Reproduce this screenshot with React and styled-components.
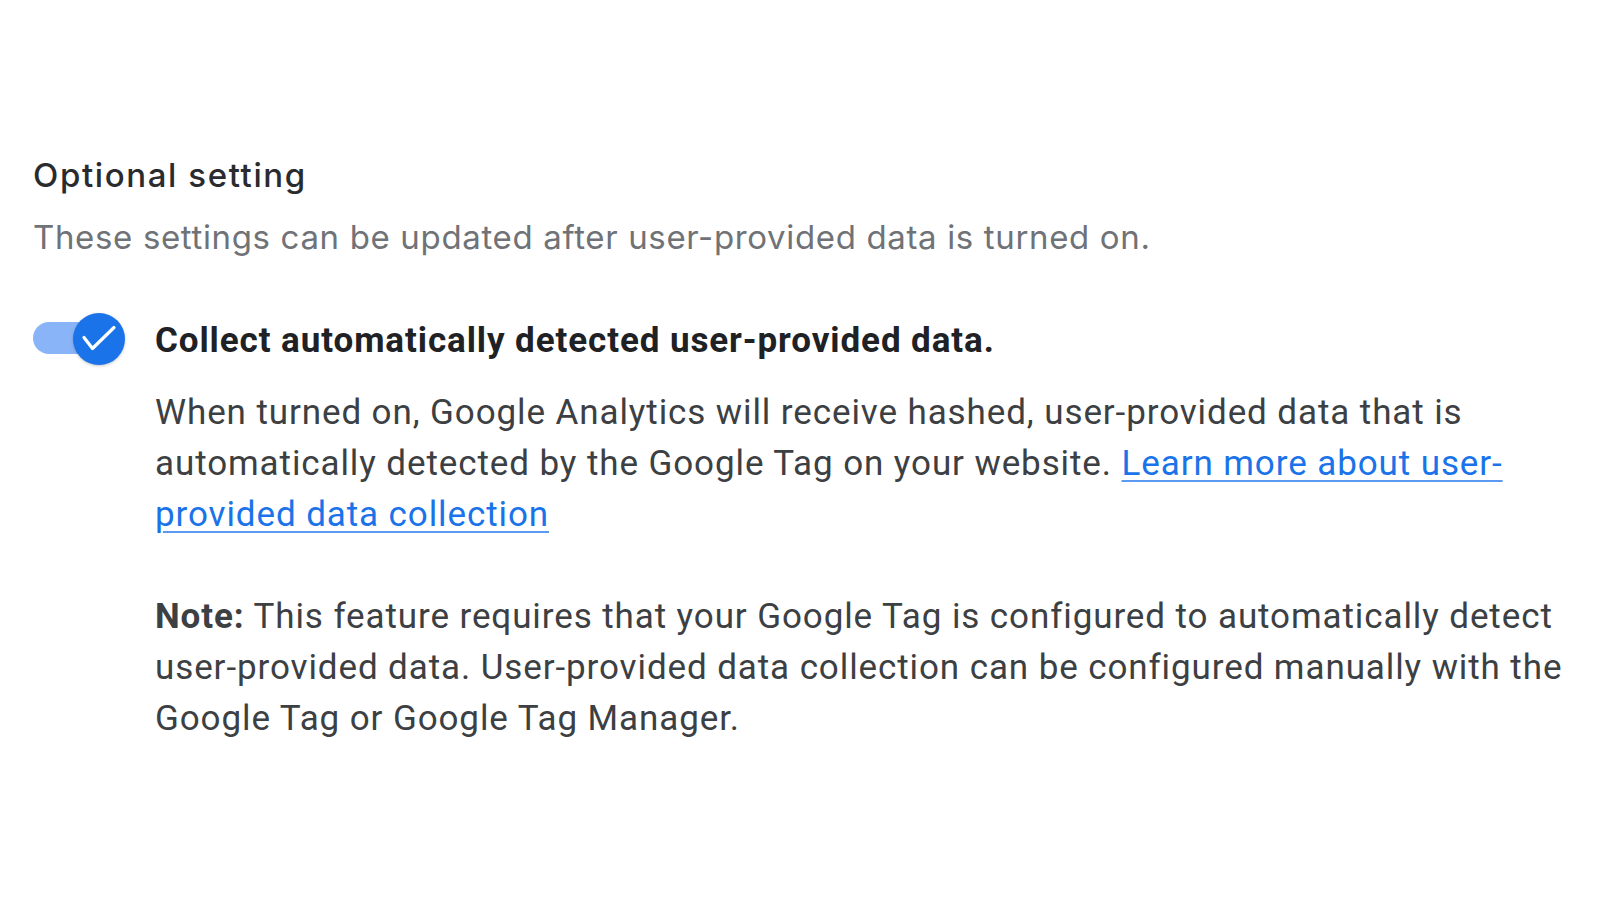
import styled, { createGlobalStyle } from "styled-components";

const GlobalStyle = createGlobalStyle`
  html, body {
    margin: 0;
    padding: 0;
    background: #ffffff;
  }
  body {
    font-family: Roboto, "Liberation Sans", Arial, sans-serif;
    -webkit-font-smoothing: antialiased;
  }
`;

const Page = styled.div`
  width: 1600px;
  height: 900px;
  box-sizing: border-box;
  padding: 153px 10px 0 33px;
`;

const Heading = styled.h2`
  margin: 0;
  font-family: Inter, "Open Sans", Roboto, sans-serif;
  font-weight: 500;
  font-size: 33px;
  line-height: 44px;
  letter-spacing: 1.6px;
  color: #2a2b2e;
`;

const Subtitle = styled.p`
  margin: 18px 0 0;
  font-family: Inter, "Open Sans", Roboto, sans-serif;
  font-size: 33px;
  line-height: 44px;
  letter-spacing: 0.65px;
  color: #6f7276;
`;

const SettingRow = styled.div`
  display: flex;
  align-items: flex-start;
  gap: 30px;
  margin-top: 55px;
`;

const Track = styled.button`
  position: relative;
  flex: none;
  width: 92px;
  height: 52px;
  margin-top: -1px;
  padding: 0;
  border: none;
  background: none;
  cursor: pointer;

  &::before {
    content: "";
    position: absolute;
    left: 0;
    top: 9px;
    width: 72px;
    height: 32px;
    border-radius: 16px;
    background: #8ab4f8;
  }
`;

const Knob = styled.span`
  position: absolute;
  right: 0;
  top: 0;
  width: 52px;
  height: 52px;
  border-radius: 50%;
  background: #1a73e8;
  box-shadow: 0 1px 3px rgba(60, 64, 67, 0.3);
`;

const Content = styled.div`
  flex: 1;
  min-width: 0;
  padding-top: 1px;
`;

const Title = styled.div`
  font-size: 35px;
  line-height: 51px;
  font-weight: 700;
  letter-spacing: 0.9px;
  color: #202124;
`;

const Paragraph = styled.p`
  margin: ${({ $first }) => ($first ? "21px" : "51px")} 0 0;
  font-size: 35px;
  line-height: 51px;
  letter-spacing: 0.9px;
  color: #3c4043;

  strong {
    font-weight: 700;
    color: #3c4043;
  }
`;

const Link = styled.a`
  color: #1a73e8;
  text-decoration: underline;
  text-underline-offset: 5px;
  text-decoration-thickness: 2px;
  text-decoration-color: #5b9af0;
`;

const Switch = ({ checked }) => (
  <Track role="switch" aria-checked={checked}>
    <Knob>
      <svg width="52" height="52" viewBox="0 0 52 52" fill="none">
        <path
          d="M11 24.5L19.5 35.5L41 14.5"
          stroke="#ffffff"
          strokeWidth="3.2"
          strokeLinecap="round"
          strokeLinejoin="round"
        />
      </svg>
    </Knob>
  </Track>
);

export default function App() {
  return (
    <>
      <GlobalStyle />
      <Page>
        <Heading>Optional setting</Heading>
        <Subtitle>
          These settings can be updated after user-provided data is turned on.
        </Subtitle>
        <SettingRow>
          <Switch checked />
          <Content>
            <Title>Collect automatically detected user-provided data.</Title>
            <Paragraph $first>
              When turned on, Google Analytics will receive hashed, user-provided
              data that is automatically detected by the Google Tag on your
              website.{" "}
              <Link href="#">Learn more about user-provided data collection</Link>
            </Paragraph>
            <Paragraph>
              <strong>Note:</strong> This feature requires that your Google Tag is
              configured to automatically detect user-provided data.
              User-provided data collection can be configured manually with the
              Google Tag or Google Tag Manager.
            </Paragraph>
          </Content>
        </SettingRow>
      </Page>
    </>
  );
}
